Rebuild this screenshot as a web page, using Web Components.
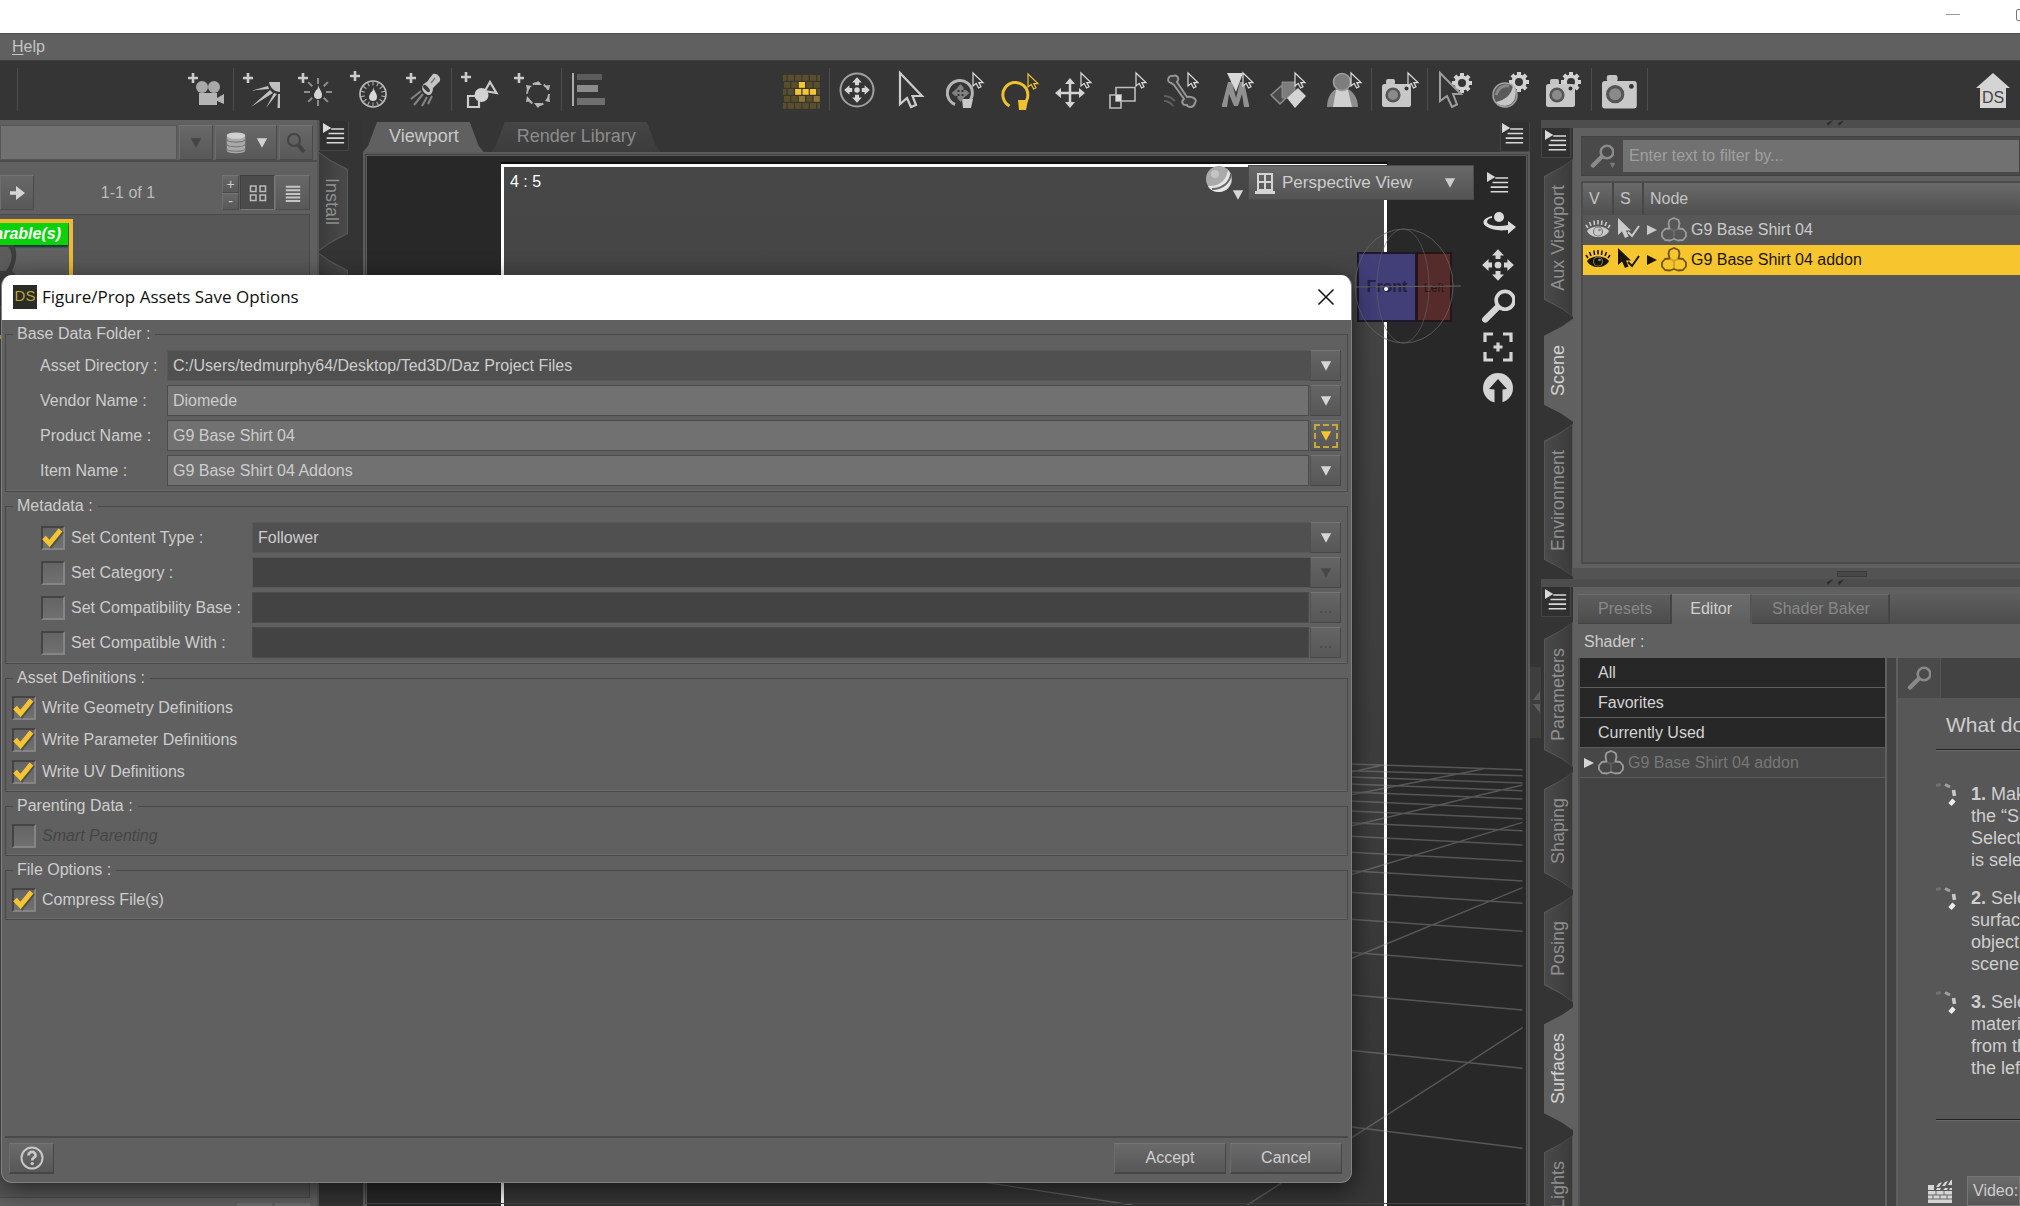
<!DOCTYPE html>
<html lang="en">
<head>
<meta charset="utf-8">
<title>Figure/Prop Assets Save Options</title>
<style>
  html, body { margin: 0; height: 100%; }
  body { overflow: hidden; background: #353535; color: #cdcdcd; font: 16px/18px "Liberation Sans", Arial, sans-serif; }
</style>
</head>
<body>
<ds-app></ds-app>
<script>
const base = `*{box-sizing:border-box} button,input,select{font:inherit;color:inherit;margin:0;border:0;padding:0;border-radius:0;outline:0;background:none}
  button{display:flex;align-items:center;justify-content:center} svg{display:block}`;
function define(name, css, html, after) {
  customElements.define(name, class extends HTMLElement {
    constructor() { super(); this.attachShadow({ mode: 'open' }); }
    connectedCallback() {
      this.shadowRoot.innerHTML = `<style>${base}${css}</style>` + (typeof html === 'function' ? html(this) : html);
      if (after) after(this);
    }
  });
}

/* ---------- icons, [viewBox size, markup] ---------- */
const plus = (x, y) => `<path d="M${x-5} ${y}h10M${x} ${y-5}v10" stroke="#ccc" stroke-width="2.6" fill="none"/>`;
const ptr = (x, y, c = '#ddd') => `<path transform="translate(${x} ${y})" d="M0 0V13L3.2 10.4 5.6 15 8 13.8 5.8 9.6H10Z" fill="#353535" stroke="${c}" stroke-width="1.2"/>`;
const camera = (x, y, s = 1) => `<g transform="translate(${x} ${y}) scale(${s})"><rect x="4" y="0" width="9" height="6" rx="2" fill="#c4c4c4"/><rect x="0" y="5" width="29" height="23" rx="2.5" fill="#c8c8c8"/><circle cx="11" cy="16" r="7.6" fill="#555"/><circle cx="11" cy="16" r="5" fill="#8a8a8a"/><circle cx="24.500" cy="9.500" r="2" fill="#333"/></g>`;
const gear = (x, y) => { let t = ''; for (let i = 0; i < 8; i++) t += `<rect x="-2" y="-10" width="4" height="5" transform="rotate(${i*45})"/>`;
  return `<g transform="translate(${x} ${y})" fill="#d2d2d2">${t}<circle r="5.800" fill="none" stroke="#d2d2d2" stroke-width="3.600"/></g>`; };
const rays = (cx, cy, r1, r2, n, c, w) => { let d = ''; for (let i = 0; i < n; i++) { const a = i * 2 * Math.PI / n; d += `M${(cx+r1*Math.sin(a)).toFixed(1)} ${(cy+r1*Math.cos(a)).toFixed(1)}L${(cx+r2*Math.sin(a)).toFixed(1)} ${(cy+r2*Math.cos(a)).toFixed(1)}`; }
  return `<path d="${d}" stroke="${c}" stroke-width="${w}" fill="none"/>`; };
const flame = (x, y) => `<path transform="translate(${x} ${y})" d="M0 -7C1 -3 4 -1 4 3 4 6 2 7 0 7S-4 6 -4 3C-4 1 -2.500 0 -2 -2 0 -2 0 -5 0 -7Z" fill="#d6d6d6"/>`;
const bricks = (() => { let s = ''; for (let r = 0; r < 5; r++) for (let c = 0; c < 6; c++) { const x = 2 + c * 7.4 - (r % 2 ? 0 : 3.7), x0 = Math.max(x, 1), x1 = Math.min(x + 6.2, 38);
  const lit = (r == 1 && c == 2) || (r == 2 && c > 1 && c < 5), mid = (r == 3 && (c == 2 || c == 4)); if (x1 > x0) s += `<rect x="${x0.toFixed(1)}" y="${5+r*7}" width="${(x1-x0).toFixed(1)}" height="5.800" fill="${lit?'#f7c52d':mid?'#8a7438':'#5b4f2a'}"/>`; } return s; })();
const cross = (cx, cy, a, c, w = 2.5) => `<g transform="translate(${cx} ${cy})" fill="${c}"><path d="M0 ${-a+4}V${a-4}M${-a+4} 0H${a-4}" stroke="${c}" stroke-width="${w}"/><path d="M0 ${-a}l5 6h-10zM0 ${a}l5-6h-10zM${-a} 0l6-5v10zM${a} 0l-6-5v10z"/></g>`;
const pan = (cx, cy, k, c) => `<g transform="translate(${cx} ${cy}) scale(${k})" fill="${c}"><circle r="3.400"/><path d="M0-16l6 6.500-3.500 0V-6h-5V-9.500H-6zM0 16l6-6.500-3.500 0V6h-5V9.500H-6zM-16 0l6.500-6v3.500H-6v5H-9.500V6zM16 0l-6.500-6v3.500H6v5H9.500V6z"/></g>`;
const lines = (c='#d8d8d8') => `<path d="M0 0L9 5.500 0 11Z" fill="${c}"/><path d="M9 6.500H23M6 11.500H23M4 16.500H23M4 21.500H23" stroke="${c}" stroke-width="1.700"/>`;
const mag = c => `<circle cx="17" cy="8" r="6.300" fill="none" stroke="${c}" stroke-width="2.600"/><path d="M11.500 13L3 21.500" stroke="${c}" stroke-width="4.500" stroke-linecap="round"/>`;
const prop = (c='#9c9c9c') => `<g fill="none" stroke="${c}" stroke-width="1.800" stroke-linejoin="round"><path d="M8.500 11.500L7.500 6.500 8.500 3 13 1 17.500 3 18.500 6.500 17.500 11.500 22 12 25 15.500 25 19.500 22 23 17 23.500 13 22 9 23.500 4 23 1 19.500 1 15.500 4 12Z"/><path d="M8.500 11.500L13 14 17.500 11.500M13 14V22" opacity=".3"/></g>`;
const icons = {
  cam: [40, plus(7,8) + `<circle cx="16" cy="17" r="6" fill="#a8a8a8"/><circle cx="28" cy="17" r="6" fill="#a8a8a8"/><path d="M13 23H31V35H13ZM31 28L38 24V34L31 31Z" fill="#b4b4b4"/>`],
  distant: [40, plus(6,8) + `<path d="M27 12H38V22C33 22 28 18 27 12Z" fill="#c0c0c0"/><path d="M26 16L10 20.500 27 19ZM28 20L9 37 31 23ZM32 23L24 38 35 24ZM36 24L35.500 38H38V24Z" fill="#c0c0c0"/>`],
  point: [40, plus(7,8) + rays(22,22,8,14,8,'#8d8d8d',2) + flame(22,22)],
  ring: [40, plus(5,6) + `<circle cx="23" cy="24" r="13" fill="none" stroke="#bbb" stroke-width="1.700"/>` + rays(23,24,8.5,12.5,14,'#aaa',1.1) + flame(23,24)],
  spot: [40, plus(7,8) + `<path d="M29 4C33 3 37 7 36 11L29 18C29 23 26 27 22 24 19 22 17 19 19 15 20 13 24 12 25 9Z" fill="#c4c4c4"/><ellipse cx="22.500" cy="18.500" rx="2" ry="4.500" transform="rotate(-42 22.500 18.500)" fill="#3a3a3a"/><path d="M27 13L31 8" stroke="#777" stroke-width="1.500"/><path d="M17 21L7 29M19 24L10 35M23 27L18 36M28 26L24 34" stroke="#858585" stroke-width="2"/>`],
  prim: [40, plus(6,7) + `<path d="M8 26H19V37H8ZM30 12L36.500 23 25 21Z" fill="none" stroke="#ccc" stroke-width="2.200"/><circle cx="21.500" cy="25" r="7" fill="#d2d2d2"/>`],
  nul: [40, plus(5,8) + `<circle cx="24" cy="24" r="11" fill="none" stroke="#b0b0b0" stroke-width="2" stroke-dasharray="7 4.500"/><path d="M24 11l4 4h-8zM24 38l4-5h-8zM12 15l6 1-5 4zM36 15l-6 1 5 4zM12 32l1-6 4 5zM36 32l-1-6-4 5z" fill="#b8b8b8"/>`],
  align: [40, `<path d="M2 3H4V36H2Z" fill="#aaa"/><path d="M7 4H32V10H7Z" fill="#5c5c5c"/><path d="M7 15H28V22H7Z" fill="#8c8c8c"/><path d="M7 28H35V35H7Z" fill="#6f6f6f"/>`],
  bricks: [40, bricks],
  target: [40, `<circle cx="19" cy="20" r="16.500" fill="none" stroke="#a0a0a0" stroke-width="2"/>` + pan(19,20,.8,'#d6d6d6')],
  arrow: [40, `<path d="M8 3V34L15 28 19 37 24 35 20.500 26H30Z" fill="none" stroke="#ccc" stroke-width="2.200"/>`],
  univ: [40, `<path d="M9 34.500A12.500 12.500 0 1 1 22.500 32" fill="none" stroke="#b5b5b5" stroke-width="3"/><path d="M16 29H27L25 38H17Z" fill="#c8c8c8"/>` + cross(14.5,23,9,'#808080',2) + ptr(27,3)],
  rot: [40, `<path d="M9.500 36A12.500 12.500 0 1 1 24 34" fill="none" stroke="#f0c02f" stroke-width="3"/><path d="M18 30H28L26 40H19Z" fill="#f0c02f"/>` + ptr(28,4,'#f0c02f')],
  move: [40, cross(16,23,15,'#d4d4d4') + ptr(27,3)],
  scale: [40, `<path d="M8 17.500H27V31H8ZM2 25H13V38H2Z" fill="none" stroke="#bdbdbd" stroke-width="1.600"/><path d="M8 25H13V31H8Z" fill="#ddd"/>` + ptr(28,3)],
  bone: [40, `<path d="M9 13C4 12 6 5 11 6 15 4 18 9 15 12L25 27C30 26 36 29 33 33 32 38 26 38 25 35 20 36 19 31 22 29L12 15Z" fill="#3d3d3d" stroke="#989898" stroke-width="1.900"/><path d="M2 26c5 0 8 2 11 5M2 31c4 0 7 2 9 5" fill="none" stroke="#5f5f5f" stroke-width="2"/>` + ptr(26,3)],
  mm: [40, `<path d="M6 37V35L12 12H16L20 28 24 12H28L33 35V37H28L26 24 22 36H18L13 24 11 37Z" fill="#909090"/><path d="M11 3H27L20 22Z" fill="#d8d8d8"/>` + ptr(27,3)],
  mats: [40, `<path d="M1 25L11 16 19 25 10 34Z" fill="#4a4a4a" stroke="#8f8f8f" stroke-width="1.500"/><path d="M12 12H25V28H12Z" fill="#7c7c7c" stroke="#8f8f8f"/><path d="M17 28L28 18 36 26 25 38Z" fill="#d4d4d4"/>` + ptr(25,3)],
  person: [40, `<path d="M3 37C3 27 8 21 12 19H24C28 21 34 27 34 37Z" fill="#8e8e8e"/><path d="M12 20H24L28 37H9Z" fill="#d0d0d0"/><circle cx="18" cy="12" r="8.500" fill="#7d7d7d" stroke="#9d9d9d" stroke-width="1.600"/>` + ptr(27,3)],
  camp: [40, camera(2,9,1) + ptr(28,3)],
  arrgear: [40, gear(26,13) + `<path d="M4 3V31L11 26 16 37 21 34.500 17 24H25Z" fill="#353535" stroke="#9e9e9e" stroke-width="2"/>`],
  sphgear: [40, gear(29,12) + `<circle cx="15" cy="25" r="12" fill="#5a5a5a" stroke="#a5a5a5" stroke-width="1.500"/><path d="M6 32C16 30 22 24 23 15 27 20 27 29 21 34 15 37 9 36 6 32Z" fill="#c6c6c6"/><path d="M6 25C9 16 14 15 19 16" stroke="#888" stroke-width="3" fill="none"/>`],
  camgear: [40, gear(27,12) + camera(2,9,1)],
  camplain: [40, camera(2,5,1.2)],
  home: [40, `<path d="M20 3L37 18H33V38H7V18H3Z" fill="#d4d4d4"/><text x="20" y="33" text-anchor="middle" font-family="Liberation Sans" font-size="16" fill="#444">DS</text>`],
  lines: [24, lines()],
  mag: [24, mag('#8a8a8a')],
  magw: [24, mag('#d6d6d6')],
  magl: [24, `<circle cx="10" cy="9" r="6" fill="none" stroke="#444" stroke-width="2.200"/><path d="M14.500 14L20 21" stroke="#444" stroke-width="4"/>`],
  prop: [26, prop()], propk: [26, prop('#6b5410')],
  eye: [26, `<path d="M2 14C6 8 20 8 24 14 20 22 6 22 2 14Z" fill="currentColor"/><path d="M3 11L1 8M6 9L4.500 5M9.500 8L9 3.500M13 7.500V3M16.500 8L17 3.500M20 9L21.500 5M23 11L25 8" stroke="currentColor" stroke-width="1.600"/><circle cx="13" cy="14.500" r="4.500" fill="none" stroke="#777" stroke-width="1.100"/><circle cx="14.500" cy="13" r="1.300" fill="#888"/>`],
  sel: [26, `<path d="M3 1V18L7 14.500 10 21 13.500 19.500 11 13.500H16Z" fill="currentColor"/><path d="M13 15L17 19 24 9" stroke="currentColor" stroke-width="2" fill="none"/>`],
  orbit: [36, `<circle cx="19" cy="11" r="5" fill="#dcdcdc"/><path d="M12 10C-1 13 1 22 17 24 22 25 26 24 28 24V28L36 21 28 15V19C20 21 8 20 7 16 7 14 9 12 12 12Z" fill="#dcdcdc"/>`],
  pan: [36, pan(18,18,1.05,'#d6d6d6')],
  frame: [36, `<path d="M5 13V5H13M23 5H31V13M31 23V31H23M13 31H5V23" fill="none" stroke="#d4d4d4" stroke-width="3.200"/><path d="M13.500 18H22.500M18 13.500V22.500" stroke="#d4d4d4" stroke-width="3.200"/>`],
  reset: [36, `<circle cx="18" cy="18" r="15" fill="#d4d4d4"/><path d="M18 9L27 19 22.500 19.500V33H14.500V19.500L9 19Z" fill="#282828"/>`],
  ball: [28, `<circle cx="14" cy="14" r="13" fill="#aaa"/><path d="M3 21C16 22 22 13 23 5 30 15 25 26 15 27 9 27 5 25 3 21Z" fill="#e6e6e6"/><path d="M7 24C18 24 25 17 26 9" stroke="#666" stroke-width="2" fill="none"/><circle cx="10" cy="9" r="4" fill="#c4c4c4"/>`],
  win: [24, `<path d="M5 3H19V19H5ZM12 3V19M5 11H19" fill="none" stroke="#d4d4d4" stroke-width="2"/><path d="M2 20H22V23H2Z" fill="#d4d4d4"/>`],
  db: [26, `<path d="M3 5V21C3 25 23 25 23 21V5Z" fill="#a9a9a9"/><path d="M3 9c0 4 20 4 20 0M3 14c0 4 20 4 20 0M3 19c0 4 20 4 20 0" fill="none" stroke="#777" stroke-width="1.200"/><ellipse cx="13" cy="5" rx="10" ry="3.500" fill="#d0d0d0"/>`],
  grid: [20, `<path d="M2.500 3H8V8.500H2.500ZM12 3H17.500V8.500H12ZM2.500 12H8V17.500H2.500ZM12 12H17.500V17.500H12Z" fill="none" stroke="#bbb" stroke-width="1.500"/>`],
  list: [20, `<path d="M2 3H18M2 7H18M2 11H18M2 15H18M2 19H18" stroke="#c4c4c4" stroke-width="2.200"/>`],
  go: [20, `<path d="M3 10H11" stroke="#d6d6d6" stroke-width="3.500"/><path d="M9 3L18 10 9 17Z" fill="#d6d6d6"/>`],
  close: [20, `<path d="M2.500 2.500L17.500 17.500M17.500 2.500L2.500 17.500" stroke="#111" stroke-width="1.500"/>`],
  help: [26, `<circle cx="13" cy="13" r="10.500" fill="none" stroke="#c8c8c8" stroke-width="2"/><path d="M9.500 10.500C9.500 5.500 17 6 16.500 10.500 16.200 13 13.200 12.500 13.200 15.500" fill="none" stroke="#c8c8c8" stroke-width="2.800"/><circle cx="13.200" cy="18.600" r="1.700" fill="#c8c8c8"/>`],
  tick: [24, `<path d="M4 12L9 18 20 4" fill="none" stroke="#3c3c3c" stroke-width="5" transform="translate(1 1)" opacity=".6"/><path d="M3 11.500L8.500 17.500 19.500 4" fill="none" stroke="#f5c431" stroke-width="5"/>`],
  app: [24, `<rect width="24" height="24" fill="#2b2b27"/><text x="12" y="16" text-anchor="middle" font-family="Liberation Sans" font-size="15" fill="#b9a63a">DS</text>`],
  spin: [24, `<g fill="none" stroke-width="3"><path d="M2 3.500L7 2.500" stroke="#6e6e6e"/><path d="M11 2.500L16 5" stroke="#a0a0a0"/><path d="M19.500 8L20.500 14" stroke="#c8c8c8" stroke-width="3.600"/><path d="M20 18L16 22.500" stroke="#efefef" stroke-width="4.500"/></g>`],
  clap: [26, `<path d="M1 13H25V25H1Z" fill="#d6d6d6"/><path d="M1 7H7V12H1ZM9 9L12 5 15 4.500 12 9ZM15 8L18 4 21 3 18 8ZM21 7L24 2 25 2V7ZM9 12L10 10 14 10 13 12ZM16 12L18 10H21L20 12ZM22 12L23 10H25V12Z" fill="#d6d6d6"/><path d="M1 17H25M1 21H25M9 13V17M17 13V17M6 17V21M13 17V21M20 17V21" stroke="#666" stroke-width="1"/>`],
  dn: [14, `<path d="M1 1.500H13L7 12.500Z" fill="currentColor"/>`],
  rt: [14, `<path d="M2 2L12 7 2 12Z" fill="currentColor"/>`],
  grip: [20, `<path d="M2 3L8 0 5 4 3 6ZM13 3L19 0 16 4 14 6Z" fill="#2c2c2c"/>`],
};
define('ds-icon', `:host{display:block;flex:none}`, el => {
  const [n, m] = icons[el.getAttribute('name')], s = el.getAttribute('size') || n;
  return `<svg width="${s}" height="${s}" viewBox="0 0 ${n} ${n}" aria-hidden="true">${m}</svg>`;
});
const ic = (n, s) => `<ds-icon name="${n}"${s ? ` size="${s}"` : ''}></ds-icon>`;

/* ---------- window chrome ---------- */
define('ds-titlebar', `:host{display:flex;flex:none;height:33px;background:#fff;justify-content:flex-end;align-items:center;overflow:hidden;padding-bottom:4px}
  .min{width:14px;height:1px;background:#999}.max{width:14px;height:12px;border:1px solid #777;border-radius:2px;margin:0 -10px 0 56px}`,
  `<div class="min"></div><div class="max"></div>`);
define('ds-menubar', `:host{display:flex;flex:none;height:27px;background:#606060;border-top:1px solid #505050;align-items:center;padding-left:12px}
  a{color:#c4c4c4;text-decoration:none} u{text-underline-offset:2px}`, `<a href="#"><u>H</u>elp</a>`);
const tb = l => l.split(' ').map(n => n === '|' ? '<i></i>' : `<button aria-label="${n}">${ic(n)}</button>`).join('');
define('ds-toolbar', `:host{display:flex;flex:none;height:60px;background:#353535;align-items:center;border-top:1px solid #3f3f3f;padding:0 0 2px 17px}
  div{display:flex;align-items:center} button{width:54px;height:44px} i{width:2px;height:43px;border-left:1px solid #4c4c4c}
  .a{margin-left:160px}.b{margin-left:158px}.h{margin-left:auto}`,
  `<i></i><div class="a">${tb('cam | distant point ring spot | prim nul | align')}</div>
   <div class="b">${tb('bricks | target arrow univ rot move scale bone mm mats person | camp | arrgear sphgear camgear | camplain |')}</div>
   <div class="h">${tb('home')}</div>`);

/* ---------- vertical tab strip ---------- */
define('ds-vtabs', `:host{display:flex;flex-direction:column;flex:none;width:32px;background:#343434;overflow:hidden}
  .m{width:30px;height:30px;background:#303030;border:1px solid #454545;border-top:0;flex:none;padding:0 0 4px}
  nav{display:flex;flex-direction:column;gap:2px;padding:1px 0 0 3px}:host([wide]) nav{gap:5px;padding-top:5px}
  button{flex:none;width:29px;background:#565656;clip-path:polygon(100% 0,100% 100%,60% calc(100% - 8px),0 calc(100% - 17px),0 17px,60% 8px)}
  span{display:block;width:100%;margin:1px;padding:25px 0;writing-mode:vertical-rl;text-align:center;font-size:18px;line-height:27px;color:#8f8f8f;
    background:linear-gradient(90deg,#3b3b3b,#4a4a4a);clip-path:polygon(100% 0,100% 100%,60% calc(100% - 8px),0 calc(100% - 17px),0 17px,60% 8px)}
  :host([up]) span{transform:rotate(180deg);clip-path:polygon(0 0,0 100%,40% calc(100% - 8px),100% calc(100% - 17px),100% 17px,40% 8px)}
  .on,.on span{background:#606060;color:#d2d2d2}
  :host([left]) button{clip-path:polygon(0 0,0 100%,40% calc(100% - 8px),100% calc(100% - 17px),100% 17px,40% 8px)}
  :host([left]) span{margin-left:0;padding-right:3px;line-height:24px;clip-path:polygon(0 0,0 100%,40% calc(100% - 8px),100% calc(100% - 17px),100% 17px,40% 8px)}
  :host([left]) nav{padding-left:0}`,
  el => `<button class="m" style="clip-path:none" aria-label="Pane menu">${ic('lines',22)}</button><nav>${el.getAttribute('tabs').split(',').map(t =>
    `<button class="${t === el.getAttribute('active') ? 'on' : ''}"><span>${t || '&nbsp;'}</span></button>`).join('')}</nav>`);

/* ---------- content library ---------- */
define('ds-library', `:host{display:flex;flex-direction:column;flex:none;width:319px;background:#606060;border-right:2px solid #565656}
  .r{display:flex} .b{background:linear-gradient(#686868,#585858);border:1px solid #747474;border-color:#747474 #4a4a4a #4a4a4a #6e6e6e}
  .s{padding-top:5px;height:42px;gap:2px;border-bottom:2px solid #4c4c4c} .s input{width:177px;background:#717171;border:1px solid #565656}
  .s,.s button{color:#444} .s button{width:34px} .s .d{width:62px;gap:8px;color:#d2d2d2}
  .n{margin-top:13px;height:35px;align-items:stretch} .n .g{width:34px}.n output{flex:1;text-align:center;align-self:center;padding:0 43px 0 0;margin-left:43px;width:60px;color:#bcbcbc}
  .pm{display:flex;flex-direction:column;width:17px;margin-right:1px}.pm button{flex:1;font-size:14px;line-height:14px}
  .n .q{width:35px}.n .on{background:#4b4b4b;border-color:#3f3f3f #777 #777 #3f3f3f}.n{padding-right:7px}
  .l{flex:1;margin:4px 7px 0 0;background:#575757;border:1px solid #4a4a4a;border-left:0;padding-top:4px}
  .t{width:73px;height:120px;border:4px solid #eebb30;border-left:0;background:linear-gradient(#6b6b6b,#494949);overflow:hidden;display:flex;flex-direction:column}
  .t b{align-self:stretch;height:22px;display:flex;justify-content:flex-end;background:#0ad20a;color:#fff;font-style:italic;line-height:22px;padding-right:7px;box-shadow:0 2px 2px #033;margin-right:1px}
  .f{height:8px;display:flex;justify-content:flex-end;gap:3px;padding:5px 7px 0 0}.f i{width:35px;height:3px;background:#6c6c6c}`,
  `<div class="r s"><input aria-label="Search content"><button class="b" aria-label="History">${ic('dn',12)}</button><button class="b d" aria-label="Source">${ic('db',24)}${ic('dn',12)}</button><button class="b" aria-label="Find">${ic('magl')}</button></div>
   <div class="r n"><button class="b g" aria-label="Next">${ic('go')}</button><output>1-1 of 1</output><div class="pm"><button class="b">+</button><button class="b">-</button></div>
   <button class="b q on" aria-label="Grid">${ic('grid')}</button><button class="b q" aria-label="List">${ic('list',18)}</button></div>
   <div class="l"><div class="t"><b>arable(s)</b><svg width="69" height="60" viewBox="0 0 69 60"><path d="M0 0H14C18 8 16 18 12 26L22 36V60H0Z" fill="#3d3d3d"/><path d="M0 2H8C14 8 12 18 6 26H0Z" fill="#5c5c5c"/></svg></div></div><div class="f"><i></i><i></i></div>`);

/* ---------- 3D viewport ---------- */
const rows = [[75,92],[95,110],[114,132],[135,155],[159,180],[186,209],[216,239],[251,275],[292,318],[340,367],[395,426],[460,493],[541,577],[640,681],[767,813],[934,988],[1163,1228]];
const gx = v => 1040 + v/2.904 - 368, gy = v => 583 + v/3;
const seg = (a,b,c,d) => `M${gx(a).toFixed(1)} ${gy(b).toFixed(1)}L${gx(c).toFixed(1)} ${gy(d).toFixed(1)}`;
const floor = rows.map(([a,b]) => seg(903,a,1404,b)).join('') + [[903,100,1000,78],[903,168,1290,90],[903,262,1404,138],[903,408,1404,250],[903,660,1404,446],[500,1468,1404,866],[-300,1307,270,1398]].map(a => seg(...a)).join('');
define('ds-viewport', `:host{display:flex;flex-direction:column;flex:1;min-width:0}
  .tabs{display:flex;height:32px;align-items:flex-end;gap:7px}
  .tabs button{height:30px;padding:0 25px 3px 26px;font-size:18px;color:#8c8c8c;background:linear-gradient(#454545,#3c3c3c);clip-path:polygon(0 100%,5px 80%,14px 0,calc(100% - 14px) 0,calc(100% - 5px) 80%,100% 100%)}
  .tabs .on{background:#606060;color:#c9c9c9}.tabs .m{margin-left:auto;width:30px;height:30px;padding:0 4px 5px 0;background:#303030;border:1px solid #454545;border-top:0;clip-path:none}
  .v{flex:1;min-height:0;border:4px solid #5b5b5b;border-width:4px 4px 0 4px;outline:1px solid #444;outline-offset:-3px;background:#282828;display:grid;grid-template:1fr/1fr;overflow:hidden}
  .v>*{grid-area:1/1;min-width:0;min-height:0}
  .frame{margin:8px 139px 0 134px;border:3px solid #fff;border-bottom:0;background:linear-gradient(#474747,#363636);color:#fff;padding:6px 6px;box-shadow:0 -2px 1px #111}
  .hud{display:flex;justify-content:flex-end;align-items:flex-start;padding:9px 10px 0 0}
  .ball{display:flex;align-items:flex-end;color:#d6d6d6;height:36px;padding-right:4px}.ball ds-icon+ds-icon{margin-left:-1px}.ball ds-icon:first-child{align-self:flex-start}
  .p{width:226px;height:35px;padding:0 17px 0 4px;gap:5px;font-size:17px;justify-content:flex-start;background:linear-gradient(#686868,#545454);border:1px solid #4b4b4b}.p ds-icon:last-child{margin-left:auto}
  .c{display:flex;flex-direction:column;align-items:center;width:36px;margin-left:6px;gap:6px}.c button{height:35px;width:36px}`,
  `<div class="tabs"><button class="on">Viewport</button><button>Render Library</button><button class="m" aria-label="Pane menu">${ic('lines',22)}</button></div>
   <div class="v"><div class="frame">4 : 5</div>
   <svg width="1157" height="1049"><path d="${floor}" stroke="#aaa" stroke-opacity=".36" stroke-width="1.400" fill="none"/>
     <g transform="translate(-366 -156)" font-family="Liberation Sans"><rect x="1357" y="253" width="58" height="68" fill="#413e78" stroke="#1c1a2c" stroke-width="2"/><rect x="1416" y="253" width="34" height="68" fill="#552b2b" stroke="#251616" stroke-width="2"/>
     <text x="1386" y="292" text-anchor="middle" font-size="16" font-weight="bold" fill="#23213f">Front</text><text x="1433" y="292" text-anchor="middle" font-size="12" fill="#2d1515">Left</text>
     <ellipse cx="1403" cy="286" rx="49" ry="57" fill="none" stroke="#666" opacity=".8"/><ellipse cx="1402" cy="286" rx="26" ry="57" fill="none" stroke="#666" opacity=".6"/><path d="M1354 287L1460 286" stroke="#666"/><circle cx="1385" cy="289" r="2" fill="#fff"/></g></svg>
   <div class="hud"><div class="ball">${ic('ball')}${ic('dn',12)}</div><button class="p">${ic('win')}Perspective View${ic('dn',12)}</button>
   <div class="c"><button aria-label="Options">${ic('lines',22)}</button><button aria-label="Orbit">${ic('orbit')}</button><button aria-label="Pan">${ic('pan',34)}</button><button aria-label="Zoom">${ic('magw',34)}</button><button aria-label="Frame">${ic('frame')}</button><button aria-label="Reset">${ic('reset')}</button></div></div></div>`);

/* ---------- right-hand panes ---------- */
define('ds-pane', `:host{display:flex;flex-direction:column;min-height:0;background:#606060}
  .bar{height:8px;flex:none;background:#4d4d4d;display:flex;overflow:hidden;padding-left:284px}.in{flex:1;display:flex;min-height:0}.c{flex:1;display:flex;flex-direction:column;min-width:0;min-height:0}`,
  el => `<div class="bar">${ic('grip')}</div><div class="in"><ds-vtabs up ${el.hasAttribute('wide') ? 'wide' : ''} tabs="${el.getAttribute('tabs')}" active="${el.getAttribute('active')}"></ds-vtabs><div class="c"><slot></slot></div></div>`);
define('ds-scene', `:host{display:flex;flex:1;flex-direction:column;padding:8px 0 0 8px;min-height:0}
  .s{display:flex;height:40px;background:#494949;border:1px solid #424242;flex:none;padding:3px 0}.s button{width:41px;color:#777;align-items:center;padding-right:6px}.s ds-icon+ds-icon{margin:18px -6px 0 -5px}
  .s input{flex:1;min-width:0;background:#717171;padding-left:6px}.s input::placeholder{color:#a0a0a0;opacity:1}
  .l{flex:1;margin-top:5px;background:#575757;border:2px solid #4c4c4c;border-right:0;min-height:0}
  table{width:100%;border-collapse:collapse;table-layout:fixed}th{height:32px;text-align:left;font-weight:400;padding:0 0 0 6px;background:linear-gradient(#6a6a6a,#4f4f4f);border-right:2px solid #474747;color:#c4c4c4}th:last-child{border-right:0}
  th:nth-child(-n+2){width:30px}td{height:30px;padding:0 0 0 2px;color:#cacaca}td div{display:flex;align-items:center;gap:2px}td span{margin-left:2px}.y td{background:#f7c52d;color:#1b1500}
  .h{height:15px;flex:none;display:flex;align-items:center;margin-left:-8px;padding-left:264px;border-top:4px solid #606060;background:#535353}.h i{width:30px;height:6px;background:#484848;border:1px solid #3a3a3a}`,
  `<div class="s"><button aria-label="Filter">${ic('mag')}${ic('dn',7)}</button><input aria-label="Filter" placeholder="Enter text to filter by..."></div>
   <div class="l"><table><thead><tr><th>V</th><th>S</th><th>Node</th></tr></thead><tbody>
   <tr><td>${ic('eye')}</td><td>${ic('sel')}</td><td><div>${ic('rt')}${ic('prop')}<span>G9 Base Shirt 04</span></div></td></tr>
   <tr class="y"><td>${ic('eye')}</td><td>${ic('sel')}</td><td><div>${ic('rt')}${ic('propk')}<span>G9 Base Shirt 04 addon</span></div></td></tr></tbody></table></div><div class="h"><i></i></div>`);
define('ds-step', `:host{display:flex;gap:13px;font-size:18px;line-height:22px;white-space:nowrap;margin-bottom:16px}ds-icon{margin:-1px 0 0 -2px}div{color:#cfcfcf}`,
  `${ic('spin')}<div><slot></slot></div>`);
define('ds-shader', `:host{display:flex;flex:1;flex-direction:column;padding:7px 0 0 5px;min-height:0}
  .t{display:flex;height:30px;flex:none;background:linear-gradient(#5e5e5e,#4c4c4c)}.t button{color:#888;border:1px solid #444;border-width:1px 2px 1px 0;padding:0 18px 0 20px;border-top-color:#6d6d6d}
  .t .on{color:#d0d0d0;background:linear-gradient(#6b6b6b,#606060);border-color:#757575 #555 #606060 #555;padding:0 18px}
  h4{margin:0;font-weight:400;padding:9px 0 7px 6px;flex:none}.b{display:flex;flex:1;min-height:0}
  ul{margin:0;padding:0;list-style:none;width:307px;flex:none;background:#434343;border-left:2px solid #505050}li{height:30px;display:flex;align-items:center;padding-left:18px;background:#272727;border-bottom:1px solid #5c5c5c;color:#d4d4d4}
  .g{background:#474747;color:#787878;gap:2px;padding-left:2px}.g span{margin-left:2px}.g ds-icon:first-child{color:#d6d6d6}
  .x{width:13px;flex:none;background:#434343;border:solid #606060;border-width:0 2px}
  .r{flex:1;min-width:0;background:#575757;overflow:hidden;white-space:nowrap;display:flex;flex-direction:column}.s{display:flex;height:40px;flex:none;background:#4a4a4a}.s button{width:43px;border-right:1px solid #555}.s input{flex:1;min-width:0;background:#434343}
  h2{font-size:21px;line-height:24px;font-weight:400;margin:15px 0 0 48px}hr{width:100%;flex:none;margin:12px 0 0 38px;border:0;border-top:1px solid #222;border-bottom:1px solid #6a6a6a}
  .st{padding:32px 0 0 38px}.e{margin-top:24px}.v{display:flex;margin:auto 0 0 29px;gap:14px;align-items:center}.v button{height:30px;width:90px;justify-content:flex-start;padding-left:5px;background:linear-gradient(#6b6b6b,#555);border:1px solid #757575}`,
  `<div class="t"><button>Presets</button><button class="on">Editor</button><button>Shader Baker</button></div><h4>Shader :</h4>
   <div class="b"><ul><li>All</li><li>Favorites</li><li>Currently Used</li><li class="g">${ic('rt')}${ic('prop')}<span>G9 Base Shirt 04 addon</span></li></ul><div class="x"></div>
   <div class="r"><div class="s"><button aria-label="Find">${ic('mag')}</button><input aria-label="Find shader"></div><h2>What do</h2><hr>
   <div class="st"><ds-step><b>1.</b> Mak<br>the “Su<br>Select<br>is sele</ds-step><ds-step><b>2.</b> Sele<br>surfac<br>object<br>scene</ds-step><ds-step><b>3.</b> Sele<br>materi<br>from th<br>the left</ds-step></div>
   <hr class="e"><div class="v">${ic('clap')}<button>Video:</button></div></div></div>`);

/* ---------- dialog ---------- */
define('ds-group', `:host{display:block}fieldset{margin:0;min-width:0;border:1px solid #494949;box-shadow:inset 0 -1px #6b6b6b;padding:7px 6px 5px}legend{height:18px;padding:0 5px 0 4px;margin-left:1px}div{display:flex;flex-direction:column;gap:4px}`,
  el => `<fieldset><legend>${el.getAttribute('legend')}</legend><div><slot></slot></div></fieldset>`);
const box = `.k{display:grid;flex:none}.k>*{grid-area:1/1}.k input{appearance:none;width:24px;height:24px;background:linear-gradient(#646464,#707070);border:2px solid #444;border-color:#444 #858585 #858585 #444}.k ds-icon{pointer-events:none;display:none}.k input:checked+ds-icon{display:block}`;
define('ds-check', `:host{display:flex;align-items:center;height:28px;gap:6px}${box}:host([off]) label{color:#454545;font-style:italic}`,
  el => `<span class="k"><input type="checkbox" id="c" ${el.hasAttribute('on') ? 'checked' : ''} ${el.hasAttribute('off') ? 'disabled' : ''}>${ic('tick')}</span><label for="c">${el.getAttribute('label')}</label>`);
define('ds-field', `:host{display:flex;align-items:center;height:31px;padding-left:28px}.lab{display:flex;align-items:center;gap:6px;width:127px;flex:none}:host([check]) .lab{width:212px;padding-left:1px}${box}
  .c{flex:1;display:grid;grid-template-columns:1fr 32px;height:31px}.c select,.c .i{grid-area:1/1/2/3;appearance:none;width:100%;height:31px;padding:0 5px;background:#505050;border:1px solid #585858;opacity:1;color:#cdcdcd}
  .c .i{grid-area:1/1;background:#717171;border:1px solid #4b4b4b}.c :disabled{background:#434343}.c button{grid-area:1/2;margin-left:1px;background:linear-gradient(#656565,#575757)!important;border:1px solid #777;border-color:#747474 #464646 #464646 #505050;color:#d6d6d6;z-index:1}
  .c button:disabled{color:#474747}.hot button{color:#f7c52d}.hot button ds-icon{outline:2px dashed #c9a83b;outline-offset:4px}`,
  el => { const a = n => el.getAttribute(n), k = a('kind'), off = el.hasAttribute('off'), d = off ? 'disabled' : '';
    const v = a('value') || '';
    const lab = el.hasAttribute('check') ? `<span class="k"><input type="checkbox" id="c" ${a('check') === 'on' ? 'checked' : ''}>${ic('tick')}</span><label for="c">${a('label')}</label>` : `<label for="f">${a('label')}</label>`;
    return `<div class="lab">${lab}</div><div class="c ${el.hasAttribute('hot') ? 'hot' : ''}">${k === 'select' ? `<select id="f" aria-label="${a('label')}" ${d}><option>${v}</option></select>` : `<input class="i" id="f" aria-label="${a('label')}" value="${v}" ${d}>`}
    <button aria-label="Choose" ${d}>${k === 'browse' ? '...' : ic('dn',12)}</button></div>`; });
define('ds-dialog', `:host{position:absolute;left:1px;top:275px;width:1351px;height:908px;display:flex;flex-direction:column;background:#606060;border-radius:11px;border:1px solid #808080;border-width:0 1px 1px;overflow:hidden;box-shadow:0 6px 26px #0009}
  header{display:flex;align-items:center;height:45px;flex:none;background:#fff;color:#111;padding:0 15px 2px 11px}h1{font:17px/20px "Open Sans","Noto Sans",sans-serif;margin:0 auto 0 5px}
  main{flex:1;padding:5px 3px 0 3px;display:flex;flex-direction:column;gap:5px}footer{display:flex;height:46px;flex:none;margin:0 3px;border-top:2px solid #4a4a4a;padding:5px 6px 0 4px;gap:4px}
  footer button{width:112px;height:31px;background:linear-gradient(#6a6a6a,#575757);border:1px solid #777;border-color:#757575 #464646 #464646 #6c6c6c;border-bottom-width:2px;color:#d0d0d0}footer .q{width:45px;margin-right:auto}`,
  `<header>${ic('app')}<h1>Figure/Prop Assets Save Options</h1><button aria-label="Close">${ic('close')}</button></header>
   <main><ds-group legend="Base Data Folder :"><ds-field kind="select" label="Asset Directory :" value="C:/Users/tedmurphy64/Desktop/Ted3D/Daz Project Files"></ds-field><ds-field kind="input" label="Vendor Name :" value="Diomede"></ds-field><ds-field kind="input" hot label="Product Name :" value="G9 Base Shirt 04"></ds-field><ds-field kind="input" label="Item Name :" value="G9 Base Shirt 04 Addons"></ds-field></ds-group>
   <ds-group legend="Metadata :"><ds-field check="on" kind="select" label="Set Content Type :" value="Follower"></ds-field><ds-field check kind="select" off label="Set Category :"></ds-field><ds-field check kind="browse" off label="Set Compatibility Base :"></ds-field><ds-field check kind="browse" off label="Set Compatible With :"></ds-field></ds-group>
   <ds-group legend="Asset Definitions :"><ds-check on label="Write Geometry Definitions"></ds-check><ds-check on label="Write Parameter Definitions"></ds-check><ds-check on label="Write UV Definitions"></ds-check></ds-group>
   <ds-group legend="Parenting Data :"><ds-check off label="Smart Parenting"></ds-check></ds-group>
   <ds-group legend="File Options :"><ds-check on label="Compress File(s)"></ds-check></ds-group></main>
   <footer><button class="q" aria-label="Help">${ic('help')}</button><button>Accept</button><button>Cancel</button></footer>`);

define('ds-app', `:host{display:flex;flex-direction:column;height:100vh;overflow:hidden}.w{flex:1;display:flex;min-height:0}
  .l{width:44px;padding-top:1px}.x{width:11px;flex:none;background:#343434;padding-top:547px}.x div{height:71px;background:#3e3e3e;display:flex;align-items:center}
  .r{width:479px;flex:none;display:flex;flex-direction:column;min-height:0}.top{flex:0 0 459px}.bot{flex:1}`,
  `<ds-titlebar></ds-titlebar><ds-menubar></ds-menubar><ds-toolbar></ds-toolbar>
   <div class="w"><ds-library></ds-library><ds-vtabs class="l" left tabs="Install,Smart Content"></ds-vtabs><ds-viewport></ds-viewport><div class="x"><div><svg width="11" height="24"><path d="M10 0L3 9H10ZM3 13H10V22Z" fill="#5e5e5e"/></svg></div></div>
   <div class="r"><ds-pane class="top" tabs="Aux Viewport,Scene,Environment" active="Scene"><ds-scene></ds-scene></ds-pane><ds-pane class="bot" wide tabs="Parameters,Shaping,Posing,Surfaces,Lights" active="Surfaces"><ds-shader></ds-shader></ds-pane></div></div>
   <ds-dialog></ds-dialog>`);
</script>
</body>
</html>
